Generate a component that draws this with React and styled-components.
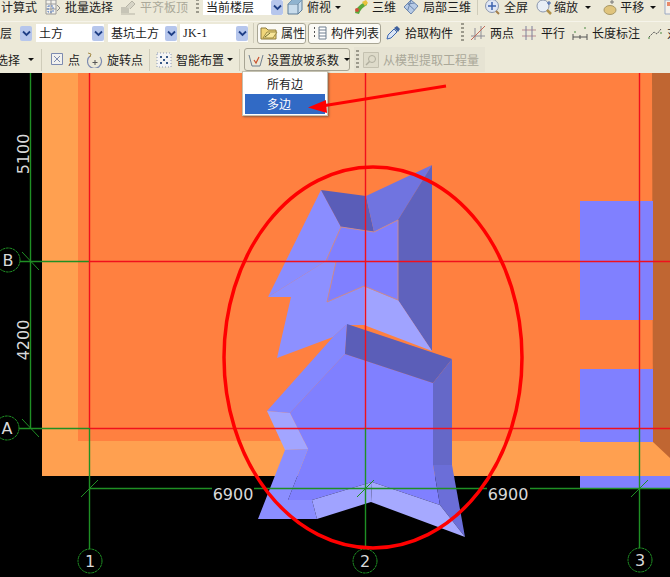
import styled, { createGlobalStyle } from "styled-components";

const GlobalStyle = createGlobalStyle`
  html, body {
    margin: 0;
    padding: 0;
    background: #000;
  }
  * {
    box-sizing: border-box;
  }
`;

const Page = styled.div`
  position: relative;
  width: 670px;
  height: 577px;
  overflow: hidden;
  display: flex;
  flex-direction: column;
  background: #000;
  font-family: "Noto Sans CJK SC", "Liberation Sans", sans-serif;
  font-size: 12px;
  color: #1c1c1c;
`;

const Toolbars = styled.div`
  flex: 0 0 73px;
  display: flex;
  flex-direction: column;
  background: #ece9d8;
  overflow: hidden;
`;

const Row = styled.div`
  flex: 0 0 ${(p) => p.$h}px;
  min-height: 0;
  display: flex;
  align-items: center;
  padding-bottom: ${(p) => p.$pb || 0}px;
  white-space: nowrap;
  border-bottom: ${(p) => (p.$line ? "1px solid #f6f4ea" : "none")};
`;

const Tool = styled.div`
  flex: none;
  display: flex;
  align-items: center;
  gap: ${(p) => p.$gap ?? 4}px;
  margin-left: ${(p) => p.$ml || 0}px;
  line-height: 16px;
  color: ${(p) => (p.$off ? "#aaa899" : "#1c1c1c")};
`;

const Caret = styled.span`
  flex: none;
  width: 0;
  height: 0;
  margin-left: ${(p) => p.$ml || 0}px;
  border-left: 3px solid transparent;
  border-right: 3px solid transparent;
  border-top: 3px solid #111;
`;

const Sep = styled.span`
  flex: none;
  width: 1px;
  height: ${(p) => p.$h || 20}px;
  margin-left: ${(p) => p.$ml || 0}px;
  background: #cfccba;
`;

const Grip = styled.span`
  flex: none;
  width: 3px;
  height: ${(p) => p.$h || 20}px;
  margin-left: ${(p) => p.$ml || 0}px;
  background: repeating-linear-gradient(to bottom, #9c9a8c 0 2px, transparent 2px 4px);
`;

const Combo = styled.div`
  flex: none;
  width: ${(p) => p.$w}px;
  height: ${(p) => p.$ch || 18}px;
  margin-left: ${(p) => p.$ml || 0}px;
  padding-left: 3px;
  display: flex;
  align-items: center;
  justify-content: space-between;
  background: #fff;
  line-height: 16px;
`;

const Mono = styled.span`
  font-family: "Liberation Serif", serif;
  font-size: 12px;
  letter-spacing: 0.3px;
`;

const Chevron = styled.span`
  flex: none;
  width: 12px;
  height: 15px;
  margin-left: ${(p) => p.$ml || 0}px;
  display: flex;
  align-items: center;
  justify-content: center;
  border-radius: 2px;
  background: #b6c6ec;
`;

const FrameButton = styled.div`
  flex: none;
  width: ${(p) => p.$w}px;
  height: ${(p) => p.$bh || 21}px;
  margin-left: ${(p) => p.$ml || 0}px;
  padding-left: ${(p) => p.$pl || 3}px;
  display: flex;
  align-items: center;
  gap: ${(p) => p.$gap ?? 4}px;
  border: 1px solid #a8a594;
  border-radius: 3px;
  background: ${(p) => p.$bg || "#fbfaf5"};
  line-height: 16px;
`;

const OffPanel = styled.div`
  flex: none;
  width: 131px;
  height: 25px;
  margin-left: 4px;
  display: flex;
  align-items: center;
  gap: 4px;
  padding-left: 2px;
  background: #e6e3d3;
  color: #aaa899;
`;

const Canvas = styled.div`
  flex: 1;
  min-height: 0;
  background: #000;
`;

const Drawing = styled.svg`
  display: block;
`;

const DimText = styled.text`
  font-family: "DejaVu Sans", sans-serif;
  font-size: 16px;
  fill: #d9d9d9;
`;

const Menu = styled.div`
  position: absolute;
  left: 242px;
  top: 71px;
  width: 86px;
  height: 45px;
  padding: 2px;
  background: #fff;
  border: 1px solid #c4c1b0;
  box-shadow: 1px 1px 2px rgba(60, 60, 60, 0.6);
`;

const MenuItem = styled.div`
  height: 20px;
  padding-left: 22px;
  line-height: 20px;
  background: ${(p) => (p.$active ? "#316ac5" : "transparent")};
  color: ${(p) => (p.$active ? "#fff" : "#1c1c1c")};
`;

const ArrowLayer = styled.svg`
  position: absolute;
  left: 0;
  top: 0;
  pointer-events: none;
`;

// toolbar icons
const Ico = ({ w = 16, h = 16, children }) => (
  <svg width={w} height={h} viewBox={`0 0 ${w} ${h}`} style={{ flex: "none", display: "block" }}>
    {children}
  </svg>
);

const ChevronMark = () => (
  <Ico w={9} h={7}>
    <path d="M1 1.500 L4.500 5 L8 1.500" fill="none" stroke="#1f3f86" strokeWidth="1.800" />
  </Ico>
);

const BatchIcon = () => (
  <Ico>
    <path d="M1 1h10v14H1z" fill="#f3f2ec" stroke="#9a9a9a" />
    <path d="M1 5h10M1 10h10M6 1v14" stroke="#9a9a9a" />
    <path d="M3 7h5v6H3z" fill="none" stroke="#5a7fc0" strokeDasharray="2 1" />
    <path d="M12 6l3 3-3 3" fill="none" stroke="#8a8a8a" />
  </Ico>
);

const AlignIcon = () => (
  <Ico>
    <path d="M1 14V8h8v6z" fill="#c6c4b6" />
    <path d="M6 8l6-6 3 3-5 5" fill="#d6d4c6" stroke="#b5b3a5" />
    <path d="M1 15h14" stroke="#b5b3a5" />
  </Ico>
);

const CubeIcon = () => (
  <Ico>
    <path d="M1 5l4-4h10v10l-4 4H1z" fill="#c8dcec" stroke="#5d7c98" />
    <path d="M1 5h10v10M11 5l4-4" fill="none" stroke="#5d7c98" />
    <path d="M1 5l4-4h10l-4 4z" fill="#8fb3cf" />
  </Ico>
);

const ThreeDIcon = () => (
  <Ico>
    <path d="M2 14C3 9 7 5 13 3l1 3C10 8 7 11 6 15z" fill="#5aa83c" />
    <path d="M9 3l4-2 2 3-3 3z" fill="#e7c23c" />
    <circle cx="4" cy="11" r="2" fill="#d0503a" />
  </Ico>
);

const PartIcon = () => (
  <Ico>
    <path d="M1 8l7-7 7 6-7 8z" fill="#b7cbe6" stroke="#6b86ad" />
    <path d="M4.500 4.500l7 6.500M8 1l-3.500 11M11.500 4l-7 1" stroke="#6b86ad" fill="none" />
  </Ico>
);

const FullIcon = () => (
  <Ico>
    <circle cx="8" cy="7" r="6.500" fill="#dfe6f4" stroke="#8b97ae" />
    <path d="M8 3v8M4 7h8" stroke="#3e63ad" strokeWidth="1.500" />
    <path d="M12 12l3 3" stroke="#a57e4a" strokeWidth="2" />
  </Ico>
);

const ZoomIcon = () => (
  <Ico w={18}>
    <circle cx="7" cy="7" r="6" fill="#e8eef6" stroke="#8b97ae" />
    <path d="M11 11l4 4" stroke="#b09048" strokeWidth="2.500" />
    <path d="M13 2v4M11 4h4" stroke="#3e63ad" />
  </Ico>
);

const HandIcon = () => (
  <Ico w={15}>
    <ellipse cx="7" cy="11" rx="6" ry="4.500" fill="#e0c47c" stroke="#a89866" />
    <path d="M9 1v4M7 3h4" stroke="#777" />
  </Ico>
);

const ColorIcon = () => (
  <Ico w={12}>
    <path d="M1 1h14v14H1z" fill="#f4f0ea" stroke="#9aa9c4" />
    <path d="M3 3h4v4H3z" fill="#e88a6a" />
    <path d="M7 8h4v4H7z" fill="#6ec0d8" />
  </Ico>
);

const FolderIcon = () => (
  <Ico w={18} h={16}>
    <path d="M1 3h5l2 2h8v9H1z" fill="#f0d67a" stroke="#8d7a3c" />
    <path d="M3 13l4-6h10l-4 6z" fill="#f8e69a" stroke="#9c8a44" />
    <path d="M5 12l5-4" stroke="#6c6c2c" />
  </Ico>
);

const ListIcon = () => (
  <Ico>
    <path d="M7 2h7v12H7z" fill="#fff" stroke="#6f7f8f" />
    <path d="M7 5h7M7 8h7M7 11h7" stroke="#6f7f8f" />
    <path d="M2 3h2M2 7h2M2 11h2" stroke="#555" strokeWidth="2" strokeDasharray="1 1" />
  </Ico>
);

const DropperIcon = () => (
  <Ico>
    <path d="M2 14l1-4 6-6 3 3-6 6z" fill="#d9e4f4" stroke="#3d68b0" />
    <path d="M9 3l3-2 3 3-2 3z" fill="#3d5f9c" />
  </Ico>
);

const TwoPointIcon = () => (
  <Ico>
    <path d="M1 11h14M5 3v12M11 1v13" stroke="#8d8d95" />
    <path d="M1 15L15 1" stroke="#c06a5a" />
  </Ico>
);

const ParallelIcon = () => (
  <Ico>
    <path d="M1 5h14M1 11h14" stroke="#b98b92" />
    <path d="M5 1v14M11 1v14" stroke="#7d7f9a" />
  </Ico>
);

const LengthIcon = () => (
  <Ico>
    <path d="M1 12h14M1 9v6M15 9v6M8 10v4" stroke="#555" />
    <path d="M2 6h2v2H2zM12 2h2v2h-2z" fill="#9ab98c" />
  </Ico>
);

const PolyDimIcon = () => (
  <Ico>
    <path d="M2 12l5-5 3 2 4-5" fill="none" stroke="#555" strokeDasharray="2 1" />
    <path d="M1 12h2v2H1zM13 7h2v2h-2z" fill="#9ab98c" />
  </Ico>
);

const BoxPointIcon = () => (
  <Ico w={14}>
    <path d="M1.500 1.500h11v11h-11z" fill="#f1f1ee" stroke="#7d8bb0" />
    <path d="M4 4l6 6M10 4l-6 6" stroke="#7d8bb0" />
  </Ico>
);

const RotateIcon = () => (
  <Ico>
    <path d="M3 4a7 7 0 1 0 10 1" fill="none" stroke="#7d8bb0" strokeWidth="1.200" />
    <path d="M8 8v5M5.500 10.500h5" stroke="#555" />
    <path d="M1 1l3 1-1 3" fill="none" stroke="#a58c4a" />
  </Ico>
);

const SmartIcon = () => (
  <Ico>
    <path d="M1 1h14v14H1z" fill="#f4f4f4" stroke="#8a97b4" strokeDasharray="1 2" />
    <path d="M4 4h2v2H4zM10 4h2v2h-2zM7 7h2v2H7zM4 10h2v2H4zM10 10h2v2h-2z" fill="#3a5a88" />
  </Ico>
);

const SlopeIcon = () => (
  <Ico>
    <path d="M1 3l3 11h8l3-11" fill="none" stroke="#6f7f8f" />
    <path d="M6 8l2 3 3-6" fill="none" stroke="#c8502c" strokeWidth="1.200" />
  </Ico>
);

const OffScopeIcon = () => (
  <Ico>
    <path d="M0.500 0.500h15v15h-15z" fill="#dedbca" stroke="#c4c1b0" />
    <circle cx="9" cy="7" r="3.500" fill="none" stroke="#b0ae9e" />
    <path d="M6.500 9.500L3 13" stroke="#b0ae9e" strokeWidth="1.500" />
  </Ico>
);

// CAD drawing data, in page coordinates
const slabs = [
  { fill: "#ffa050", points: "42,73 670,73 670,476 42,476" },
  { fill: "#ff8040", points: "78,73 670,73 670,441 78,441" },
  { fill: "#c06632", points: "652,73 670,73 670,458 653,442" },
  { fill: "#8080ff", points: "580,201 653,201 653,320 580,320" },
  { fill: "#8080ff", points: "580,369 653,369 653,442 580,442" },
  { fill: "#8080ff", points: "580,476 670,476 670,488 580,488" },
];

const pit = [
  // upper pit
  { fill: "#8a8dff", points: "321,190 341,227 326,261 268,297" },
  { fill: "#8d90ff", points: "268,297 326,261 336,262 327,302 364,286 364,325 346,325 333,337 277,358 291,297" },
  { fill: "#5a5db8", points: "321,190 366,196 374,232 341,227" },
  { fill: "#7074e0", points: "366,196 432,165 398,220 374,232" },
  { fill: "#5f62bd", points: "432,165 432,351 398,300 398,220" },
  { fill: "#a0a3ff", points: "364,286 398,300 432,351 364,325" },
  { fill: "#8080ff", stroke: "#c88a92", points: "341,227 374,232 398,220 398,300 364,286 327,302 336,262 326,261" },
  // lower pit
  { fill: "#8488ff", points: "333,337 347,324 345,354 290,413 267,411" },
  { fill: "#8080ff", points: "345,354 433,383 433,465 440,505 372,482 312,500 288,500 308,449 290,413" },
  { fill: "#5b5eb8", points: "347,324 452,359 433,383 345,354" },
  { fill: "#6568c8", points: "452,359 452,465 433,465 433,383" },
  { fill: "#6b6ed8", points: "433,465 452,465 465,537 440,505" },
  { fill: "#a2a5ff", points: "267,411 290,413 308,449 285,450" },
  { fill: "#8b8eff", points: "285,450 308,449 288,500 312,500 317,519 258,519" },
  { fill: "#a0a3ff", points: "312,500 372,482 371,502 317,519" },
  { fill: "#a6a9ff", points: "372,482 440,505 465,537 371,502" },
];

const GREEN = "#1f8f24";
const RED = "#f0101c";

const lines = [
  { stroke: GREEN, d: "M30.500 73V428" },
  { stroke: GREEN, d: "M20 261.500H89" },
  { stroke: GREEN, d: "M19 428.500H89" },
  { stroke: RED, d: "M89.500 73V428" },
  { stroke: RED, d: "M365.500 73V428" },
  { stroke: RED, d: "M639.500 73V428" },
  { stroke: RED, d: "M89 261.500H670" },
  { stroke: RED, d: "M89 428.500H670" },
  { stroke: GREEN, d: "M89.500 428V549" },
  { stroke: GREEN, d: "M365.500 428V549" },
  { stroke: GREEN, d: "M639.500 428V548" },
  { stroke: GREEN, d: "M89 488.500H212M254 488.500H487M530 488.500H670" },
  { stroke: GREEN, d: "M22 252L39 270M22 419L39 437", thin: true },
  { stroke: GREEN, d: "M81 497L98 480M357 497L374 480M631 497L648 480", thin: true },
];

const axes = [
  { label: "B", x: 8, y: 260 },
  { label: "A", x: 7, y: 428 },
  { label: "1", x: 90, y: 561 },
  { label: "2", x: 365, y: 561 },
  { label: "3", x: 640, y: 560 },
];

const dims = [
  { label: "6900", x: 233, y: 500 },
  { label: "6900", x: 508, y: 500 },
  { label: "5100", x: 29, y: 154, rotate: true },
  { label: "4200", x: 29, y: 340, rotate: true },
];

export default function App() {
  return (
    <Page>
      <GlobalStyle />
      <Toolbars>
        <Row $h={22} $pb={7} $line>
          <Tool $ml={1}>计算式</Tool>
          <Tool $ml={8}><BatchIcon />批量选择</Tool>
          <Tool $ml={7} $off><AlignIcon />平齐板顶</Tool>
          <Grip $ml={8} $h={16} />
          <Combo $w={80} $ml={4} $ch={16}>当前楼层<Chevron><ChevronMark /></Chevron></Combo>
          <Tool $ml={4}><CubeIcon />俯视</Tool>
          <Caret $ml={4} />
          <Tool $ml={12} $gap={3}><ThreeDIcon />三维</Tool>
          <Tool $ml={7}><PartIcon />局部三维</Tool>
          <Sep $ml={6} $h={16} />
          <Tool $ml={6}><FullIcon />全屏</Tool>
          <Tool $ml={8} $gap={0}><ZoomIcon />缩放</Tool>
          <Caret $ml={7} />
          <Tool $ml={12} $gap={2}><HandIcon />平移</Tool>
          <Caret $ml={6} />
          <Tool $ml={8}><ColorIcon /></Tool>
        </Row>
        <Row $h={24} $pb={2}>
          <Tool $ml={-12}>楼层</Tool>
          <Chevron $ml={8}><ChevronMark /></Chevron>
          <Combo $w={68} $ml={4}>土方<Chevron><ChevronMark /></Chevron></Combo>
          <Combo $w={69} $ml={4}>基坑土方<Chevron><ChevronMark /></Chevron></Combo>
          <Combo $w={68} $ml={3}><Mono>JK-1</Mono><Chevron><ChevronMark /></Chevron></Combo>
          <Sep $ml={5} />
          <FrameButton $w={49} $ml={3} $pl={2} $gap={3}><FolderIcon />属性</FrameButton>
          <FrameButton $w={73} $ml={2} $gap={3}><ListIcon />构件列表</FrameButton>
          <Tool $ml={4}><DropperIcon />拾取构件</Tool>
          <Grip $ml={8} />
          <Tool $ml={6}><TwoPointIcon />两点</Tool>
          <Tool $ml={7}><ParallelIcon />平行</Tool>
          <Tool $ml={7}><LengthIcon />长度标注</Tool>
          <Tool $ml={7}><PolyDimIcon />对齐</Tool>
        </Row>
        <Row $h={27}>
          <Tool $ml={-4}>选择</Tool>
          <Caret $ml={8} />
          <Sep $ml={7} $h={22} />
          <Tool $ml={8}><BoxPointIcon />点</Tool>
          <Tool $ml={7}><RotateIcon />旋转点</Tool>
          <Sep $ml={6} $h={22} />
          <Tool $ml={6}><SmartIcon />智能布置</Tool>
          <Caret $ml={3} />
          <Sep $ml={6} $h={22} />
          <FrameButton $w={106} $ml={4} $bh={23} $gap={3} $bg="#ebe8d8">
            <SlopeIcon />设置放坡系数<Caret $ml={2} />
          </FrameButton>
          <OffPanel>
            <Grip />
            <OffScopeIcon />从模型提取工程量
          </OffPanel>
        </Row>
      </Toolbars>

      <Canvas>
        <Drawing width="670" height="504" viewBox="0 73 670 504">
          {slabs.map((s) => (
            <polygon key={s.points} points={s.points} fill={s.fill} />
          ))}
          {pit.map((s) => (
            <polygon key={s.points} points={s.points} fill={s.fill} stroke={s.stroke || "none"} />
          ))}
          {lines.map((l) => (
            <path key={l.d} d={l.d} stroke={l.stroke} strokeWidth={l.thin ? 1 : 1.4} fill="none" />
          ))}
          {axes.map((a) => (
            <g key={a.label}>
              <circle cx={a.x} cy={a.y} r="12" fill="none" stroke={GREEN} strokeWidth="1" strokeDasharray="3 0.6" />
              <DimText x={a.x} y={a.y + 6} textAnchor="middle">{a.label}</DimText>
            </g>
          ))}
          {dims.map((d) => (
            <DimText
              key={d.label + d.x}
              x={d.x}
              y={d.y}
              textAnchor="middle"
              transform={d.rotate ? `rotate(-90 ${d.x} ${d.y})` : undefined}
            >
              {d.label}
            </DimText>
          ))}
          <ellipse cx="373" cy="357.500" rx="149" ry="190.500" fill="none" stroke="#ff0000" strokeWidth="3.500" />
        </Drawing>
      </Canvas>

      <Menu>
        <MenuItem>所有边</MenuItem>
        <MenuItem $active>多边</MenuItem>
      </Menu>

      <ArrowLayer width="670" height="577">
        <path d="M446 86L322 106" stroke="#ff0000" strokeWidth="3" fill="none" />
        <path d="M308 107.500L326 100L327 113z" fill="#ff0000" />
      </ArrowLayer>
    </Page>
  );
}
